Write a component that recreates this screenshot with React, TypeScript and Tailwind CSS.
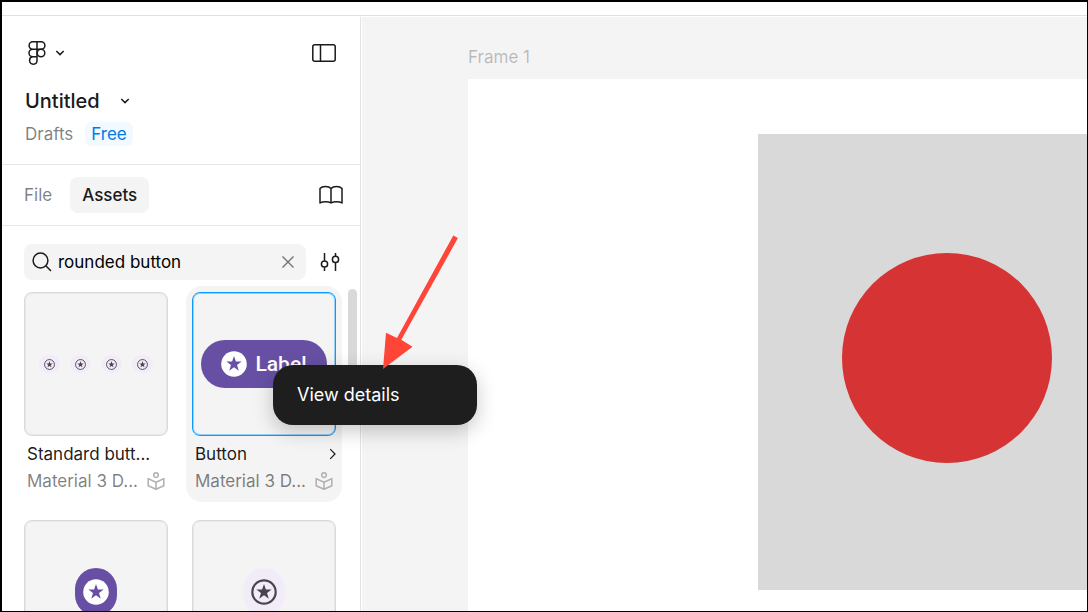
import { useState } from "react";
import type { ReactNode } from "react";

interface Asset {
  id: string;
  name?: string;
  library?: string;
  preview: ReactNode;
}

const STAR = "M12 4.6l1.75 5.1 5.35.1-4.3 3.2 1.6 5.2-4.4-3.1-4.4 3.1 1.6-5.2-4.3-3.2 5.35-.1z";

const StarSolid = ({ className }: { className: string }) => (
  <svg viewBox="0 0 24 24" className={className} aria-hidden="true">
    <circle cx="12" cy="12" r="11.8" fill="#fff" />
    <path d={STAR} fill="#6750a4" />
  </svg>
);

const StarOutline = ({ className }: { className: string }) => (
  <svg viewBox="0 0 24 24" className={className} fill="#49454f" aria-hidden="true">
    <circle cx="12" cy="12" r="10.8" fill="none" stroke="#49454f" strokeWidth="2" />
    <path d={STAR} />
  </svg>
);

const Caret = () => (
  <svg width="10" height="6" viewBox="0 0 10 6" fill="none" stroke="currentColor" strokeWidth="1.5" aria-hidden="true">
    <path d="M1.3 1L5 4.6 8.7 1" />
  </svg>
);

const LibraryIcon = () => (
  <svg width="18" height="18" viewBox="0 0 18 18" fill="none" stroke="#b0b0b0" strokeWidth="1.5" strokeLinejoin="round" className="shrink-0" aria-label="Library">
    <circle cx="9" cy="3.1" r="2.3" />
    <path d="M9 10.2L1.2 6.6v7.2L9 17.2l7.8-3.4V6.6zV17.2" />
  </svg>
);

const assets: Asset[] = [
  {
    id: "standard",
    name: "Standard butt...",
    library: "Material 3 D...",
    preview: (
      <div className="flex gap-[10px]">
        {[1, 2, 3, 4].map((i) => (
          <span key={i} className="flex h-[18px] w-[21px] items-center justify-center rounded-full bg-[#f2ecf8]">
            <StarOutline className="size-[11px]" />
          </span>
        ))}
      </div>
    ),
  },
  {
    id: "button",
    name: "Button",
    library: "Material 3 D...",
    preview: (
      <div className="flex h-12 items-center gap-2 rounded-full bg-[#6750a4] px-5 text-white">
        <StarSolid className="size-[26px]" />
        <span className="font-[Roboto,sans-serif] text-[21px] leading-8 font-medium">Label</span>
      </div>
    ),
  },
  {
    id: "icon-filled",
    preview: (
      <div className="flex h-12 w-[42px] items-center justify-center rounded-full bg-[#6750a4]">
        <StarSolid className="size-[26px]" />
      </div>
    ),
  },
  {
    id: "icon-tonal",
    preview: (
      <div className="flex h-12 w-[42px] items-center justify-center rounded-full bg-[#f2ecf8]">
        <StarOutline className="size-[26px]" />
      </div>
    ),
  },
];

const AssetCard = ({ asset, active }: { asset: Asset; active: boolean }) => (
  <div className={`min-w-0 rounded-2xl px-[6px] pt-[6px] pb-2 ${active ? "bg-[#f4f4f4]" : ""}`}>
    <div
      className={`flex h-36 items-center justify-center rounded-lg border bg-[#f4f4f4] ${
        active ? "border-[#0d99ff] ring-1 ring-inset ring-[#0d99ff]/40" : "border-[#d9d9d9] ring-1 ring-inset ring-[#d9d9d9]/40"
      }`}
    >
      {asset.preview}
    </div>
    {asset.name && (
      <div className="mt-1 flex h-[27px] items-center justify-between pl-[3px] text-[17px] leading-6 whitespace-nowrap text-black/90">
        <span>{asset.name}</span>
        {active && (
          <svg width="7" height="12" viewBox="0 0 7 12" fill="none" stroke="currentColor" strokeWidth="1.2" className="shrink-0" aria-hidden="true">
            <path d="M1.2 1.2L6 6 1.2 10.8" />
          </svg>
        )}
      </div>
    )}
    {asset.library && (
      <div className="flex h-[27px] items-center justify-between pr-[3px] pl-[3px] text-[17px] leading-6 whitespace-nowrap text-black/50">
        <span>{asset.library}</span>
        <LibraryIcon />
      </div>
    )}
  </div>
);

const Sidebar = () => {
  const [query, setQuery] = useState("rounded button");

  return (
    <aside className="flex w-[359px] shrink-0 flex-col border-r border-[#e2e2e2] bg-white">
      <header className="border-b border-[#e6e6e6] pt-[18px] pr-6 pb-[18px] pl-[23px]">
        <div className="flex h-9 items-center justify-between">
          <button aria-label="Main menu" className="flex items-center gap-[9px] pl-[3px]">
            <svg width="18" height="24" viewBox="0 0 18 24" fill="none" stroke="currentColor" strokeWidth="1.5" aria-hidden="true">
              <path d="M9 .8H4.8a3.7 3.7 0 0 0 0 7.4H9zM9 .8h4.2a3.7 3.7 0 0 1 0 7.4H9zM9 8.2H4.8a3.8 3.8 0 0 0 0 7.6H9zM9 15.8H4.8A3.7 3.7 0 1 0 9 19.5z" />
              <circle cx="13" cy="12" r="3.8" />
            </svg>
            <Caret />
          </button>
          <button aria-label="Minimize UI">
            <svg width="24" height="18" viewBox="0 0 24 18" fill="none" stroke="currentColor" strokeWidth="1.5" aria-hidden="true">
              <rect x=".8" y=".8" width="22.4" height="16.4" rx="2" />
              <path d="M8.5 .8v16.4" />
            </svg>
          </button>
        </div>
        <button className="mt-3 flex h-9 items-center gap-5 text-xl font-medium">
          Untitled
          <Caret />
        </button>
        <div className="mt-[3px] flex h-6 items-center gap-3 text-[17px] leading-6">
          <span className="text-black/50">Drafts</span>
          <span className="rounded-md bg-[#f2f9ff] px-[6px] text-[#007be5]">Free</span>
        </div>
      </header>

      <nav className="flex items-center border-b border-[#e6e6e6] py-3 pr-[17px] pl-[22px] text-[17px] leading-6">
        <button className="text-black/50">File</button>
        <button className="ml-[18px] h-9 rounded-lg bg-[#f4f4f4] px-3 font-medium">Assets</button>
        <button aria-label="Libraries" className="ml-auto">
          <svg width="24" height="20" viewBox="0 0 24 20" fill="none" stroke="currentColor" strokeWidth="1.5" strokeLinejoin="round" aria-hidden="true">
            <path d="M12 3.6C10.6 2 8.8 1.6 6.5 1.6S2.4 2 1 3.6V18c1.4-1 3.2-1.3 5.5-1.3S10.6 17 12 18c1.4-1 3.2-1.3 5.5-1.3S21.6 17 23 18V3.6C21.6 2 19.8 1.6 17.5 1.6S13.4 2 12 3.6zV18" />
          </svg>
        </button>
      </nav>

      <div className="flex items-center gap-[14px] pt-[18px] pr-5 pl-[22px]">
        <label className="flex h-9 min-w-0 flex-1 items-center gap-[6px] rounded-lg bg-[#f4f4f4] pr-3 pl-2">
          <svg width="20" height="20" viewBox="0 0 20 20" fill="none" stroke="currentColor" strokeWidth="1.5" className="shrink-0" aria-hidden="true">
            <circle cx="8.5" cy="8.5" r="7.4" />
            <path d="M13.8 13.8l5.2 5.2" />
          </svg>
          <input
            aria-label="Search assets"
            value={query}
            onChange={(e) => setQuery(e.target.value)}
            className="h-6 min-w-0 flex-1 bg-transparent text-[17px] leading-6 text-black outline-none"
          />
          <button aria-label="Clear search" onClick={() => setQuery("")} className="text-black/55">
            <svg width="12" height="12" viewBox="0 0 12 12" fill="none" stroke="currentColor" strokeWidth="1.3" aria-hidden="true">
              <path d="M.5 .5l11 11M11.5 .5L.5 11.5" />
            </svg>
          </button>
        </label>
        <button aria-label="Filter" className="shrink-0">
          <svg width="20" height="20" viewBox="0 0 20 20" fill="none" stroke="currentColor" strokeWidth="1.5" aria-hidden="true">
            <path d="M4.5 1v7.8M4.5 15.2V19M15.5 1v3.2M15.5 10.6V19" />
            <circle cx="4.5" cy="12" r="3.1" />
            <circle cx="15.5" cy="7.4" r="3.1" />
          </svg>
        </button>
      </div>

      <div className="mt-[6px] flex min-h-0 flex-1 overflow-hidden pr-[3px] pl-4">
        <div className="grid flex-1 grid-cols-2 content-start gap-3">
          {assets.map((asset) => (
            <AssetCard key={asset.id} asset={asset} active={asset.id === "button"} />
          ))}
        </div>
        <div className="mt-[3px] ml-[6px] h-[100px] w-[9px] rounded-full bg-[#d9d9d9]" />
      </div>
    </aside>
  );
};

const Canvas = () => (
  <main className="ml-px flex min-w-0 flex-1 flex-col overflow-hidden bg-[#f4f4f4] pt-7 pl-[106px]">
    <span className="h-[34px] text-[17px] leading-6 text-black/25">Frame 1</span>
    <section className="flex-1 bg-white pt-[55px] pl-[290px]">
      <div className="flex h-[456px] items-center bg-[#d9d9d9] pl-[84px]">
        <div className="mb-[9px] size-[210px] shrink-0 rounded-full bg-[#d63434]" />
      </div>
    </section>
  </main>
);

const App = () => {
  return (
    <div className="relative flex h-screen flex-col overflow-hidden border-t-2 border-r border-b border-l-2 border-black bg-white font-[Inter,sans-serif] text-[#1a1a1a]">
      <div className="h-[14px] shrink-0 border-b border-[#e0e0e0]" />
      <div className="flex min-h-0 flex-1 pt-px">
        <Sidebar />
        <Canvas />
      </div>

      {/* Context menu of the hovered asset */}
      <div role="menu" className="absolute top-[363px] left-[271px] w-[204px] rounded-[20px] bg-[#1e1e1e] p-3 shadow-[0_6px_20px_rgba(0,0,0,0.22)]">
        <button role="menuitem" className="h-9 w-full px-3 text-left text-lg text-white">
          View details
        </button>
      </div>
      <svg width="80" height="140" viewBox="0 0 80 140" className="pointer-events-none absolute top-[232px] left-[378px]" fill="#ff4438" aria-hidden="true">
        <path d="M73.3 1.5l4.6 2.6L21.3 105.800l11.200 6.900L3 135l3-36.300 11 5.300z" />
      </svg>
    </div>
  );
};

export default App;
